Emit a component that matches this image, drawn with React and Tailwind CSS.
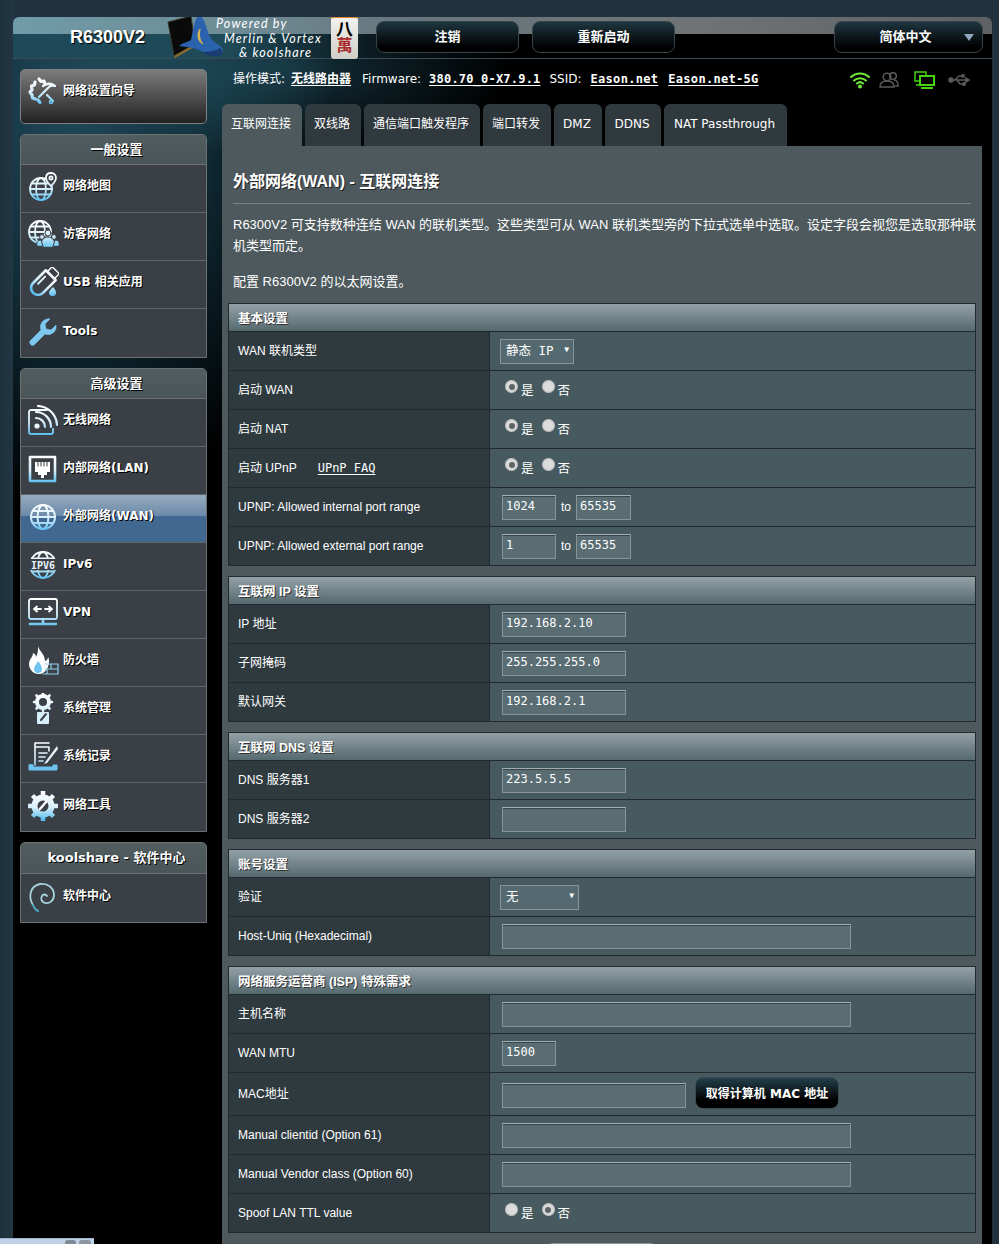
import React from "react";

const cjk = "[font-family:'Liberation_Sans','Noto_Sans_CJK_SC',sans-serif]";
const dv = "[font-family:'DejaVu_Sans','Noto_Sans_CJK_SC',sans-serif]";
const mono = "[font-family:'DejaVu_Sans_Mono','Noto_Sans_CJK_SC',monospace]";

function Ic({ children, fill = "none", sw = 1.6 }) {
  return (
    <svg width="32" height="32" viewBox="0 0 32 32" fill={fill} stroke={fill === "none" ? "url(#icg)" : "none"} strokeWidth={sw} strokeLinecap="round" strokeLinejoin="round">
      <defs>
        <linearGradient id="icg" gradientUnits="userSpaceOnUse" x1="0" y1="2" x2="0" y2="30">
          <stop offset="0" stopColor="#ffffff" />
          <stop offset="0.55" stopColor="#d8eefa" />
          <stop offset="1" stopColor="#55bdf0" />
        </linearGradient>
      </defs>
      {children}
    </svg>
  );
}
const Globe = ({ cx = 14, cy = 17, r = 11 }) => (
  <g>
    <circle cx={cx} cy={cy} r={r} />
    <ellipse cx={cx} cy={cy} rx={r * 0.45} ry={r} />
    <path d={`M${cx - r} ${cy}H${cx + r}M${cx - r * 0.85} ${cy - r * 0.5}H${cx + r * 0.85}M${cx - r * 0.85} ${cy + r * 0.5}H${cx + r * 0.85}`} />
  </g>
);
const icons = {
  wizard: (
    <Ic>
      <path d="M12 4l2 2.5 3-.5 1 3M8 7l-.5 3-3 1 .5 4-2 2 2 3 .5 3 3 1M11 25l2 2.5" strokeWidth="3.2" />
      <path d="M12 22L24 10M16 11c4-3 8-3 12 0-3-1-5 0-6 1M20 20l6 6" strokeWidth="2.2" />
      <circle cx="24" cy="27" r="1.5" />
    </Ic>
  ),
  map: (
    <Ic sw={1.8}>
      <Globe cx={14} cy={18} r={11} />
      <path fill="#3a4045" d="M24 2c-3 0-5 2-5 5 0 3 5 8 5 8s5-5 5-8c0-3-2-5-5-5z" />
      <circle cx="24" cy="7" r="1.6" />
    </Ic>
  ),
  guest: (
    <Ic sw={1.8}>
      <Globe cx={13} cy={13} r={11} />
      <g fill="url(#icg)" stroke="#3a4045" strokeWidth="1">
        <circle cx="21" cy="14" r="3" />
        <path d="M15 28c-2-6 1-10 6-10s8 4 6 10z" />
        <circle cx="15" cy="18" r="2.4" />
        <circle cx="27" cy="18" r="2.4" />
        <path d="M10 27c-1-4 1-6 4-6l2 6zM32 27c1-4-1-6-4-6l-2 6z" />
      </g>
    </Ic>
  ),
  usb: (
    <Ic>
      <g transform="rotate(45 16 16)">
        <rect x="11" y="-2" width="10" height="7" rx="1" strokeWidth="1.4" />
        <path d="M9 5h14v18a7 7 0 0 1-14 0z" strokeWidth="2.6" />
        <path d="M13 10v10" strokeWidth="2" />
      </g>
      <path d="M26 20c2 2 3 4 3 5.5a3.5 3.5 0 0 1-7 0c0-1.500 2-3.500 4-5.500z" fill="url(#icg)" stroke="none" />
    </Ic>
  ),
  tools: (
    <Ic>
      <path d="M21 3a8 8 0 0 0-7 11L3 25a3 3 0 0 0 4 4l11-11a8 8 0 0 0 11-9l-5 5-5-1-1-5 5-5a8 8 0 0 0-2-.2z" fill="#7cc8ef" stroke="#7cc8ef" strokeWidth="0.6" />
    </Ic>
  ),
  wireless: (
    <Ic>
      <path d="M20 5H4a2 2 0 0 0-2 2v20a2 2 0 0 0 2 2h20a2 2 0 0 0 2-2v-3" strokeWidth="1.8" />
      <circle cx="10" cy="21" r="2.6" fill="#e8f5fd" stroke="none" />
      <path d="M9 13a9 9 0 0 1 9 9M9 7a15 15 0 0 1 15 15M11 1a20 20 0 0 1 19 19" strokeWidth="2.2" />
    </Ic>
  ),
  lan: (
    <Ic>
      <rect x="3" y="4" width="25" height="24" strokeWidth="2.6" />
      <path d="M8 9h15v10h-3v3h-3v3h-3v-3h-3v-3H8z" fill="#ffffff" stroke="none" />
      <path d="M11 9v4M14 9v4M17 9v4M20 9v4" stroke="#3a4045" strokeWidth="1" />
    </Ic>
  ),
  wan: (
    <Ic sw={2}>
      <Globe cx={16} cy={16} r={12} />
    </Ic>
  ),
  ipv6: (
    <Ic sw={1.8}>
      <Globe cx={16} cy={16} r={13} />
      <rect x="1" y="10" width="30" height="11" fill="#3a4045" stroke="none" />
      <text x="16" y="19.500" textAnchor="middle" fontSize="10" fontWeight="700" fill="#e6f4fc" stroke="none" fontFamily="'DejaVu Sans Mono',monospace">IPV6</text>
    </Ic>
  ),
  vpn: (
    <Ic>
      <rect x="2" y="2" width="28" height="20" rx="2" strokeWidth="1.8" />
      <path d="M7 12h7M7 12l3-2.500M7 12l3 2.500M25 12h-7M25 12l-3-2.500M25 12l-3 2.500" strokeWidth="1.8" stroke="#ffffff" />
      <path d="M16 22v4M3 27h26" strokeWidth="2.6" />
    </Ic>
  ),
  firewall: (
    <Ic>
      <path d="M11 1c1 5 7 8 7 15 2 0 3-3 3-4 2 3 1 9-1 12-2 3-5 5-8 5-6 0-10-5-10-10 0-5 4-7 4-11 2 1 3 2 3 4 2-3 2-7 2-11z" fill="#ffffff" stroke="none" />
      <path d="M11 16c2 3 4 5 4 8a4 4 0 0 1-8 0c0-3 3-5 4-8z" fill="#6fc5ef" stroke="none" />
      <path d="M18 19h13v10H16M18 24h13M24 19v5M20 24v5" strokeWidth="1.2" stroke="#8fd0f0" />
    </Ic>
  ),
  admin: (
    <Ic>
      <g transform="translate(6 0)">
        <circle cx="10" cy="9" r="6" strokeWidth="4" />
        <path d="M10 0v2M10 16v2M1 9h2M17 9h2M3.500 2.500l1.500 1.500M16.500 2.500l-1.500 1.500M3.500 15.500l1.500-1.500M16.500 15.500l-1.500-1.500" strokeWidth="2.6" />
      </g>
      <rect x="10" y="19" width="12" height="12" rx="1" fill="#d7eefb" stroke="none" />
      <path d="M19 21l-5 6" stroke="#3a4045" strokeWidth="2" />
    </Ic>
  ),
  log: (
    <Ic>
      <path d="M8 2h14M8 2v22M8 6h14M22 6v4M12 12h8M12 16h6M12 20h4" strokeWidth="1.6" />
      <path d="M30 5L19 20l-2 3 3-1L31 8z" fill="#e8f5fd" stroke="none" />
      <path d="M2 24v5h28v-5h-4v2H6v-2z" fill="#6cc3ef" stroke="#6cc3ef" strokeWidth="1" />
    </Ic>
  ),
  net: (
    <Ic>
      <circle cx="16" cy="16" r="8.500" strokeWidth="6" />
      <path d="M16 1v4M16 27v4M1 16h4M27 16h4M5.500 5.500l3 3M26.500 5.500l-3 3M5.500 26.500l3-3M26.500 26.500l-3-3" strokeWidth="4.500" strokeLinecap="butt" />
      <path d="M19 12l-6 7" stroke="#ffffff" strokeWidth="2.400" />
    </Ic>
  ),
  soft: (
    <svg width="32" height="32" viewBox="0 0 32 32" fill="none" strokeLinecap="round">
      <path d="M6 24C1 16 3 5 13 3c8-1 14 4 14 11 0 6-5 9-9 8-3-1-5-4-3-7 1-2 4-2 5 0" stroke="#a6d3de" strokeWidth="1.8" />
      <path d="M6 24c1 3 3 5 5 6" stroke="#4da6c4" strokeWidth="2" />
    </svg>
  ),
};

function MenuItem({ icon, label, active, last }) {
  return (
    <div
      className={`flex h-[48px] items-center pb-[5px] ${last ? "" : "border-b border-[#606567]"} ${
        active ? "bg-[linear-gradient(#96abbe_0%,#6c8aa9_44%,#416891_44%,#416891_100%)]" : ""
      }`}
    >
      <div className="flex w-[42px] justify-center pl-[1px] pt-[2px]">{icons[icon]}</div>
      <span className={`${dv} text-[12px] font-bold text-white [text-shadow:1px_1px_0_#000]`}>{label}</span>
    </div>
  );
}

function MenuGroup({ title, items, head = "h-[30px]" }) {
  return (
    <div className="mb-[10px] overflow-hidden rounded-t-[5px] border border-[#6d7173] bg-[#3a4045]">
      <div className={`${head} flex items-center justify-center border-b border-[#6d7173] bg-[linear-gradient(#525d60,#4a5558)] pl-[6px] ${dv} text-[13px] font-bold text-white [text-shadow:1px_1px_0_#000]`}>
        {title}
      </div>
      {items.map((it, i) => (
        <MenuItem key={it.label} {...it} last={i === items.length - 1} />
      ))}
    </div>
  );
}

function Input({ w, value = "" }) {
  return (
    <input
      readOnly
      value={value}
      className={`${w} ${mono} h-[25px] border border-[#87959a] border-t-[#a4adb0] bg-[#596d73] px-[3px] pb-[2px] text-[12px] text-white shadow-[inset_0_1px_0_#37464b] outline-none`}
    />
  );
}

function Radio({ on, label }) {
  return (
    <span className={`${cjk} mr-[8px] inline-flex items-start text-[12.500px] text-white`}>
      <span className="mr-[3px] mt-[0px] flex h-[13px] w-[13px] items-center justify-center rounded-full bg-[#dcdcdc] shadow-[inset_0_0_2px_#888]">
        {on && <span className="h-[6px] w-[6px] rounded-full bg-[#5d6366]" />}
      </span>
      <span className="mt-[2px]">{label}</span>
    </span>
  );
}
const YesNo = ({ yes = true }) => (
  <div className="ml-[3px] mt-[1px] flex">
    <Radio on={yes} label="是" />
    <Radio on={!yes} label="否" />
  </div>
);

function Select({ w, text }) {
  return (
    <div className={`${w} ${mono} ml-[-2px] flex h-[25px] items-center justify-between border border-[#879498] bg-[#546a70] pl-[5px] pr-[4px] text-[12.500px] text-white`}>
      <span>{text}</span>
      <span className="mb-[2px] text-[8px]">▼</span>
    </div>
  );
}

function Row({ label, children, h = "h-[39px]", right = "" }) {
  return (
    <div className={`flex ${h} border-b border-[#222a2d]`}>
      <div className={`flex w-[260px] shrink-0 items-center bg-[#2f3a3f] pb-[1px] pl-[9px] ${cjk} text-[12px] text-white`}>{label}</div>
      <div className={`flex flex-1 items-center border-l border-[#222a2d] bg-[#475a5f] pl-[12px] ${right}`}>{children}</div>
    </div>
  );
}

function Section({ title, children }) {
  return (
    <div className="mb-[10px] border-l border-r border-t border-[#222a2d]">
      <div className={`flex h-[28px] items-center border-b border-[#222a2d] bg-[linear-gradient(#93a1a6,#55696f)] pl-[9px] pt-[3px] ${cjk} text-[12.500px] font-bold text-white [text-shadow:1px_1px_0_#333]`}>
        {title}
      </div>
      {children}
    </div>
  );
}

function TopBtn({ w, children, arrow }) {
  return (
    <div className={`${w} relative flex h-[32px] items-center justify-center rounded-[8px] border border-[#36454c] bg-[linear-gradient(#1e3640,#000_85%)] ${arrow ? "pr-[6px]" : ""} ${dv} text-[13px] font-bold text-white`}>
      {children}
      {arrow && <span className="absolute right-[8px] top-[12px] h-0 w-0 border-x-[5px] border-t-[7px] border-x-transparent border-t-[#8fa6bd]" />}
    </div>
  );
}

function Logo() {
  return (
    <div className="flex h-[41px] w-[164px] items-start">
      <svg width="60" height="44" viewBox="0 0 60 44" className="mt-[-3px] shrink-0">
        <path d="M1 8L24 2l4 28-21 12z" fill="#0a0a0a" stroke="#3a3a2a" />
        <path d="M7 42l21-12 3 1-23 13z" fill="#8a6a2a" />
        <path d="M32 0c-5 7-6 16-8 26-3 2-9 3-12 6 6 1 15 1 22 5 7 4 17 6 21 2 3-3-1-7-6-10-6-4-8-10-10-17-2-6-4-9-7-12z" fill="#2b62ad" />
        <path d="M34 38c7 4 17 6 21 2 1-2 0-4-2-6-4 3-12 4-19 4z" fill="#1a3c72" />
        <path d="M33 15c-3 5-3 12 3 15-4-4-4-10-3-15z" fill="#e0b84a" stroke="#e0b84a" />
      </svg>
      <div className="ml-[-11px] mt-[0px] w-[113px] shrink-0 font-['Lato',sans-serif] text-[12.500px] italic leading-[14.500px] tracking-[1.150px] text-white">
        <div className="whitespace-nowrap">Powered by</div>
        <div className="ml-[8px] whitespace-nowrap">Merlin &amp; Vortex</div>
        <div className="ml-[23px] whitespace-nowrap">&amp; koolshare</div>
      </div>
    </div>
  );
}

function Tile() {
  return (
    <div className={`${cjk} mt-[-1px] flex h-[43px] w-[27px] shrink-0 flex-col items-center rounded-[3px] border-t-2 border-[#d98a2e] bg-[linear-gradient(#f2f2ee,#cfcfc8)] leading-none`}>
      <span className="mt-[3px] text-[17px] font-bold text-black">八</span>
      <span className="text-[16px] font-bold text-[#a82a2a]">萬</span>
    </div>
  );
}

function StatusIcons() {
  return (
    <div className="ml-auto mr-[12px] flex items-center gap-[9px] pt-[2px]">
      <svg width="20" height="18" viewBox="0 0 20 18" fill="none" stroke="#6fe83a" strokeWidth="2" strokeLinecap="round">
        <path d="M1 6a13 13 0 0 1 18 0M4 9.500a9 9 0 0 1 12 0M7 12.500a4.500 4.500 0 0 1 6 0" />
        <circle cx="10" cy="15.500" r="2" fill="#6fe83a" stroke="none" />
      </svg>
      <svg width="20" height="18" viewBox="0 0 20 18" fill="none" stroke="#5a5a5a" strokeWidth="1.500">
        <circle cx="8" cy="6" r="3.800" />
        <path d="M1 16c0-4 3-6 7-6s7 2 7 6z" />
        <circle cx="14" cy="5" r="3.300" />
        <path d="M15 9c3 0 4 3 4 6h-3" />
      </svg>
      <svg width="22" height="20" viewBox="0 0 22 20" fill="none" stroke="#45d312" strokeWidth="1.500" className="ml-[6px]">
        <path d="M7 11H1V2h11v3" />
        <path d="M5 15H2" />
        <rect x="6" y="6" width="14" height="9" strokeWidth="2" />
        <path d="M7 18h12" strokeWidth="2" />
      </svg>
      <svg width="22" height="14" viewBox="0 0 22 14" fill="none" stroke="#5a5a5a" strokeWidth="1.500" className="ml-[3px]">
        <path d="M3 7h16M7 7l4-4h3M9 7l3 4h3" />
        <circle cx="3" cy="7" r="2" fill="#5a5a5a" />
        <path d="M18 5l3 2-3 2z" fill="#5a5a5a" />
        <rect x="14" y="2" width="2" height="2" fill="#5a5a5a" />
        <circle cx="16" cy="11" r="1.300" fill="#5a5a5a" />
      </svg>
    </div>
  );
}

const A = ({ ml, children, cls }) => <span className={`${ml} ${cls} font-bold underline underline-offset-2`}>{children}</span>;

const tabs = [
  ["互联网连接", "w-[80px]", true],
  ["双线路", "w-[56px]"],
  ["通信端口触发程序", "w-[116px]"],
  ["端口转发", "w-[68px]"],
  ["DMZ", "w-[48px]"],
  ["DDNS", "w-[56px]"],
  ["NAT Passthrough", "w-[123px]"],
];

export default function App() {
  return (
    <div className="relative h-[1244px] w-[999px] overflow-hidden bg-[#21323e] pl-[13px] pt-[17px] [background-image:linear-gradient(90deg,#1d303c_0,#223743_13px,#21323e_14px)]">
      <div className="w-[979px] overflow-hidden rounded-t-[6px] bg-black">
        <header className="flex h-[42px] items-start border-b border-[#3b4c58] pl-[57px] [background:linear-gradient(90deg,#6f9ba8_0%,#6e8c96_22%,#67767c_40%,#6f7375_70%,#5e6163_100%)_top/100%_17px_no-repeat,linear-gradient(90deg,#1d4958_0%,#1f4a58_22%,#0c1c22_36%,#000_50%,#000_100%)]">
          <div className="flex h-[41px] w-[97px] items-center font-['Liberation_Sans',sans-serif] text-[18px] font-bold text-white [text-shadow:1px_1px_1px_#000]">R6300V2</div>
          <Logo />
          <Tile />
          <div className="ml-[18px] mt-[4px] flex">
            <TopBtn w="w-[143px]">注销</TopBtn>
            <div className="w-[13px]" />
            <TopBtn w="w-[143px]">重新启动</TopBtn>
            <div className="w-[159px]" />
            <TopBtn w="w-[149px]" arrow>简体中文</TopBtn>
          </div>
        </header>

        <div className="flex h-[1186px] bg-[radial-gradient(ellipse_260px_420px_at_60px_40px,#21495a_0%,#12303c_45%,#000_100%),radial-gradient(ellipse_220px_90px_at_280px_10px,#14303a_0%,#000_100%)] [background-blend-mode:screen]">
          <aside className="w-[209px] shrink-0 pl-[7px] pt-[10px]">
            <div className="mb-[10px] flex h-[55px] w-[187px] items-center rounded-[5px] border border-[#7d7f80] bg-[linear-gradient(#7c7c7c,#222)] pb-[11px]">
              <div className="flex w-[42px] justify-center pl-[2px]">{icons.wizard}</div>
              <span className={`${dv} text-[12px] font-bold text-white [text-shadow:1px_1px_0_#000]`}>网络设置向导</span>
            </div>
            <div className="w-[187px]">
              <MenuGroup
                title="一般设置"
                items={[
                  { icon: "map", label: "网络地图" },
                  { icon: "guest", label: "访客网络" },
                  { icon: "usb", label: "USB 相关应用" },
                  { icon: "tools", label: "Tools" },
                ]}
              />
              <MenuGroup
                title="高级设置"
                items={[
                  { icon: "wireless", label: "无线网络" },
                  { icon: "lan", label: "内部网络(LAN)" },
                  { icon: "wan", label: "外部网络(WAN)", active: true },
                  { icon: "ipv6", label: "IPv6" },
                  { icon: "vpn", label: "VPN" },
                  { icon: "firewall", label: "防火墙" },
                  { icon: "admin", label: "系统管理" },
                  { icon: "log", label: "系统记录" },
                  { icon: "net", label: "网络工具" },
                ]}
              />
              <MenuGroup title="koolshare - 软件中心" head="h-[31px]" items={[{ icon: "soft", label: "软件中心" }]} />
            </div>
          </aside>

          <main className="w-[760px] shrink-0">
            <div className={`${dv} mt-[11px] flex h-[18px] items-center pl-[11px] text-[12px] text-white`}>
              <span>操作模式:</span>
              <A ml="ml-[6px]">无线路由器</A>
              <span className="ml-[11px]">Firmware:</span>
              <A ml="ml-[8px]" cls={`${mono} tracking-[0.2px]`}>380.70_0-X7.9.1</A>
              <span className="ml-[9px]">SSID:</span>
              <A ml="ml-[9px]" cls={`${mono} tracking-[0.3px]`}>Eason.net</A>
              <A ml="ml-[10px]" cls={`${mono} tracking-[0.3px]`}>Eason.net-5G</A>
              <StatusIcons />
            </div>

            <div className="mt-[16px] flex h-[42px] gap-[3px]">
              {tabs.map(([t, w, on]) => (
                <div key={t} className={`${w} ${on ? "bg-[#4d595d]" : "bg-[#30393e]"} ${dv} flex items-center justify-center rounded-t-[6px] pb-[2px] pr-[2px] text-[12px] text-white`}>
                  {t}
                </div>
              ))}
            </div>

            <div className="h-[1200px] bg-[#4d595d] px-[6px] pt-[24px]">
              <div className="mx-[5px] h-[34px] border-b border-[#75828a]">
                <div className={`${cjk} text-[16px] font-bold leading-[24px] text-white [text-shadow:1px_1px_0_#222]`}>外部网络(WAN) - 互联网连接</div>
              </div>
              <p className={`${cjk} mt-[10px] pl-[5px] text-[13px] leading-[21px] text-white`}>
                R6300V2 可支持数种连结 WAN 的联机类型。这些类型可从 WAN 联机类型旁的下拉式选单中选取。设定字段会视您是选取那种联机类型而定。
              </p>
              <p className={`${cjk} mt-[15px] pl-[5px] text-[13px] leading-[21px] text-white`}>配置 R6300V2 的以太网设置。</p>

              <div className="mt-[11px] w-[748px]">
                <Section title="基本设置">
                  <Row label="WAN 联机类型"><Select w="w-[74px]" text="静态 IP" /></Row>
                  <Row label="启动 WAN"><YesNo /></Row>
                  <Row label="启动 NAT"><YesNo /></Row>
                  <Row label={<span>启动 UPnP<span className={`${mono} ml-[21px] text-[12px] underline underline-offset-2`}>UPnP FAQ</span></span>}><YesNo /></Row>
                  <Row label="UPNP: Allowed internal port range">
                    <Input w="w-[54px]" value="1024" />
                    <span className={`${cjk} mx-[5px] text-[12px] text-white`}>to</span>
                    <Input w="w-[55px]" value="65535" />
                  </Row>
                  <Row label="UPNP: Allowed external port range">
                    <Input w="w-[54px]" value="1" />
                    <span className={`${cjk} mx-[5px] text-[12px] text-white`}>to</span>
                    <Input w="w-[55px]" value="65535" />
                  </Row>
                </Section>
                <Section title="互联网 IP 设置">
                  <Row label="IP 地址"><Input w="w-[124px]" value="192.168.2.10" /></Row>
                  <Row label="子网掩码"><Input w="w-[124px]" value="255.255.255.0" /></Row>
                  <Row label="默认网关"><Input w="w-[124px]" value="192.168.2.1" /></Row>
                </Section>
                <Section title="互联网 DNS 设置">
                  <Row label="DNS 服务器1"><Input w="w-[124px]" value="223.5.5.5" /></Row>
                  <Row label="DNS 服务器2"><Input w="w-[124px]" /></Row>
                </Section>
                <Section title="账号设置">
                  <Row label="验证"><Select w="w-[79px]" text="无" /></Row>
                  <Row label="Host-Uniq (Hexadecimal)"><Input w="w-[349px]" /></Row>
                </Section>
                <Section title="网络服务运营商 (ISP) 特殊需求">
                  <Row label="主机名称"><Input w="w-[349px]" /></Row>
                  <Row label="WAN MTU"><Input w="w-[54px]" value="1500" /></Row>
                  <Row label="MAC地址" h="h-[43px]" right="pt-[2px]">
                    <Input w="w-[184px]" />
                    <div className={`ml-[9px] mt-[-4px] flex h-[32px] w-[144px] items-center justify-center rounded-[8px] border border-[#3a4a50] bg-[linear-gradient(#23404b,#000_75%)] pt-[2px] ${dv} text-[12px] font-bold text-white`}>取得计算机 MAC 地址</div>
                  </Row>
                  <Row label="Manual clientid (Option 61)"><Input w="w-[349px]" /></Row>
                  <Row label="Manual Vendor class (Option 60)"><Input w="w-[349px]" /></Row>
                  <Row label="Spoof LAN TTL value"><YesNo yes={false} /></Row>
                </Section>
                <div className="ml-[317px] mt-[1px] h-[20px] w-[113px] rounded-t-[8px] border border-[#8c979b] bg-[#222]" />
              </div>
            </div>
          </main>
        </div>
      </div>
      <div className="absolute bottom-0 left-0 flex h-[6px] w-[94px] items-end justify-end gap-[3px] border-t border-[#9db4cf] bg-[#bfd1e6] pr-[3px]">
        <span className="h-[4px] w-[11px] rounded-t-[3px] bg-[#7f8a96]" />
        <span className="h-[4px] w-[12px] rounded-t-[3px] bg-[#8a95a1]" />
      </div>
    </div>
  );
}
